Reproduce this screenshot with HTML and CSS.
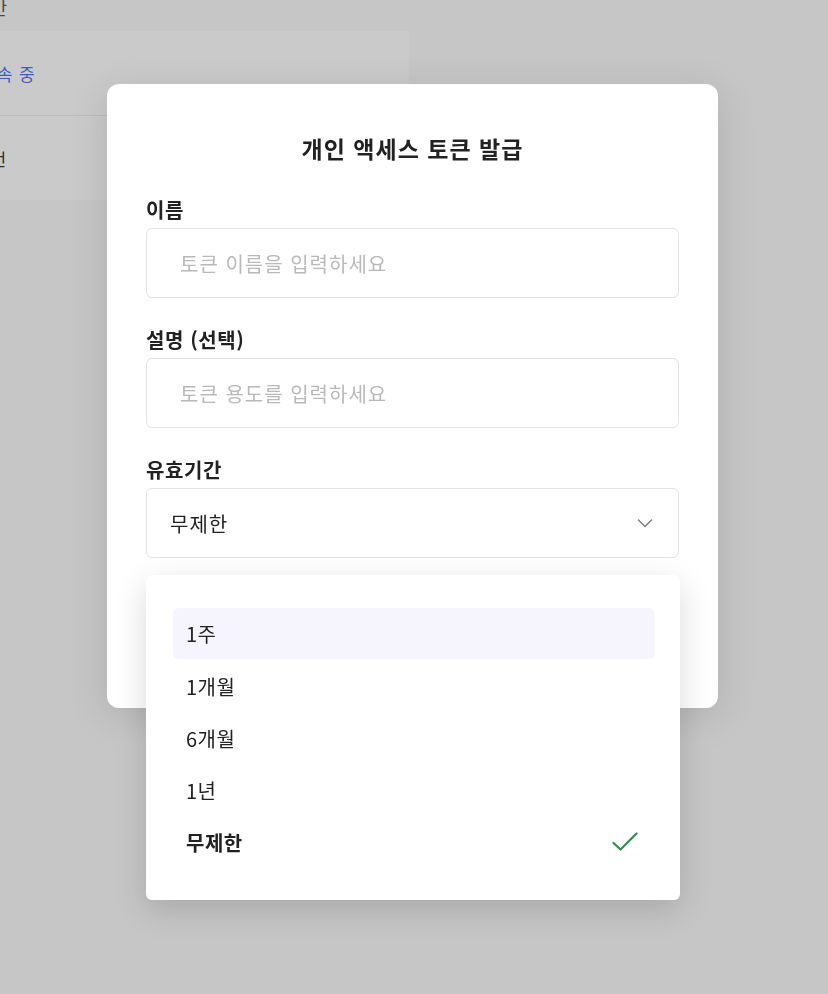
FILE: index.html
```html
<!DOCTYPE html>
<html lang="ko">
<head>
<meta charset="utf-8">
<title>개인 액세스 토큰 발급</title>
<link rel="stylesheet" href="styles.css">
</head>
<body>
  <div class="page">
    <div class="crumb">기간</div>
    <div class="panel">
      <div class="panel-row"><span class="status">접속 중</span></div>
      <div class="panel-row"><span class="value">2번</span></div>
    </div>
  </div>

  <div class="modal">
    <h2 class="modal-title">개인 액세스 토큰 발급</h2>
    <div class="field">
      <label class="field-label">이름</label>
      <div class="input"><span class="placeholder">토큰 이름을 입력하세요</span></div>
    </div>
    <div class="field">
      <label class="field-label">설명 (선택)</label>
      <div class="input"><span class="placeholder">토큰 용도를 입력하세요</span></div>
    </div>
    <div class="field">
      <label class="field-label">유효기간</label>
      <div class="select">
        <span class="select-value">무제한</span>
        <svg class="chevron" width="16" height="10" viewBox="0 0 16 10"><polyline points="1.5,2 8,8.5 14.5,2" fill="none" stroke="#7a7a7a" stroke-width="1.4" stroke-linecap="round" stroke-linejoin="round"/></svg>
      </div>
    </div>
  </div>

  <ul class="dropdown">
    <li class="option is-hover">1주</li>
    <li class="option">1개월</li>
    <li class="option">6개월</li>
    <li class="option">1년</li>
    <li class="option is-selected">무제한
      <svg class="check" width="28" height="20" viewBox="0 0 28 20"><polyline points="2.5,11 9.5,17.5 25.5,1.5" fill="none" stroke="#2f8f4a" stroke-width="2.2" stroke-linecap="round" stroke-linejoin="round"/></svg>
    </li>
  </ul>
</body>
</html>
```

FILE: styles.css
```css
html, body {
  margin: 0;
  padding: 0;
}
body {
  width: 828px;
  height: 994px;
  overflow: hidden;
  background: #c6c6c6;
  font-family: "Noto Sans CJK KR", "Noto Sans", sans-serif;
  color: #222;
}

/* dimmed page behind */
.page {
  width: 470px;
  margin-left: -61px;
}
.crumb {
  margin-top: -5px;
  height: 36px;
  padding-left: 34px;
  font-size: 18px;
  line-height: 24px;
  letter-spacing: 1px;
  color: #4a4a4a;
}
.panel {
  background: #cacaca;
}
.panel-row {
  height: 84px;
  display: flex;
  align-items: center;
  padding-left: 41px;
  font-size: 17px;
  letter-spacing: 1px;
}
.panel-row + .panel-row {
  border-top: 1px solid #bdbdbd;
}
.status {
  color: #3e5cc2;
}
.value {
  color: #2c2c2c;
}

/* modal */
.modal {
  position: fixed;
  left: 107px;
  top: 84px;
  width: 611px;
  height: 624px;
  box-sizing: border-box;
  padding: 48px 39px 0;
  background: #fff;
  border-radius: 12px;
  box-shadow: 0 8px 40px rgba(0, 0, 0, 0.12);
}
.modal-title {
  margin: 0 0 34px;
  text-align: center;
  font-size: 23px;
  line-height: 32px;
  font-weight: 700;
  letter-spacing: 1px;
  color: #222;
}
.field {
  display: flex;
  flex-direction: column;
  gap: 6px;
  margin-bottom: 30px;
}
.field-label {
  font-size: 20px;
  line-height: 24px;
  font-weight: 700;
  letter-spacing: 0.6px;
  color: #222;
}
.input,
.select {
  height: 70px;
  box-sizing: border-box;
  border: 1px solid #e3e3e3;
  border-radius: 6px;
  display: flex;
  align-items: center;
  font-size: 20px;
  letter-spacing: 1px;
}
.input {
  padding-left: 33px;
}
.placeholder {
  color: #b9b9b9;
}
.select {
  padding: 0 25px 0 23px;
  justify-content: space-between;
}
.select-value {
  color: #222;
}
.chevron {
  display: block;
}

/* dropdown */
.dropdown {
  position: fixed;
  left: 146px;
  top: 575px;
  width: 534px;
  height: 325px;
  box-sizing: border-box;
  margin: 0;
  padding: 33px 25px 0 27px;
  list-style: none;
  background: #fff;
  border-radius: 6px;
  box-shadow: 0 10px 32px rgba(0, 0, 0, 0.15);
}
.option {
  height: 52px;
  display: flex;
  align-items: center;
  justify-content: space-between;
  padding: 0 16px 0 13px;
  border-radius: 6px;
  font-size: 20px;
  letter-spacing: 0.5px;
  color: #222;
}
.option.is-hover {
  background: #f6f5fd;
  height: 51px;
  margin-bottom: 1px;
}
.option.is-selected {
  font-weight: 700;
}
.check {
  display: block;
}
```
